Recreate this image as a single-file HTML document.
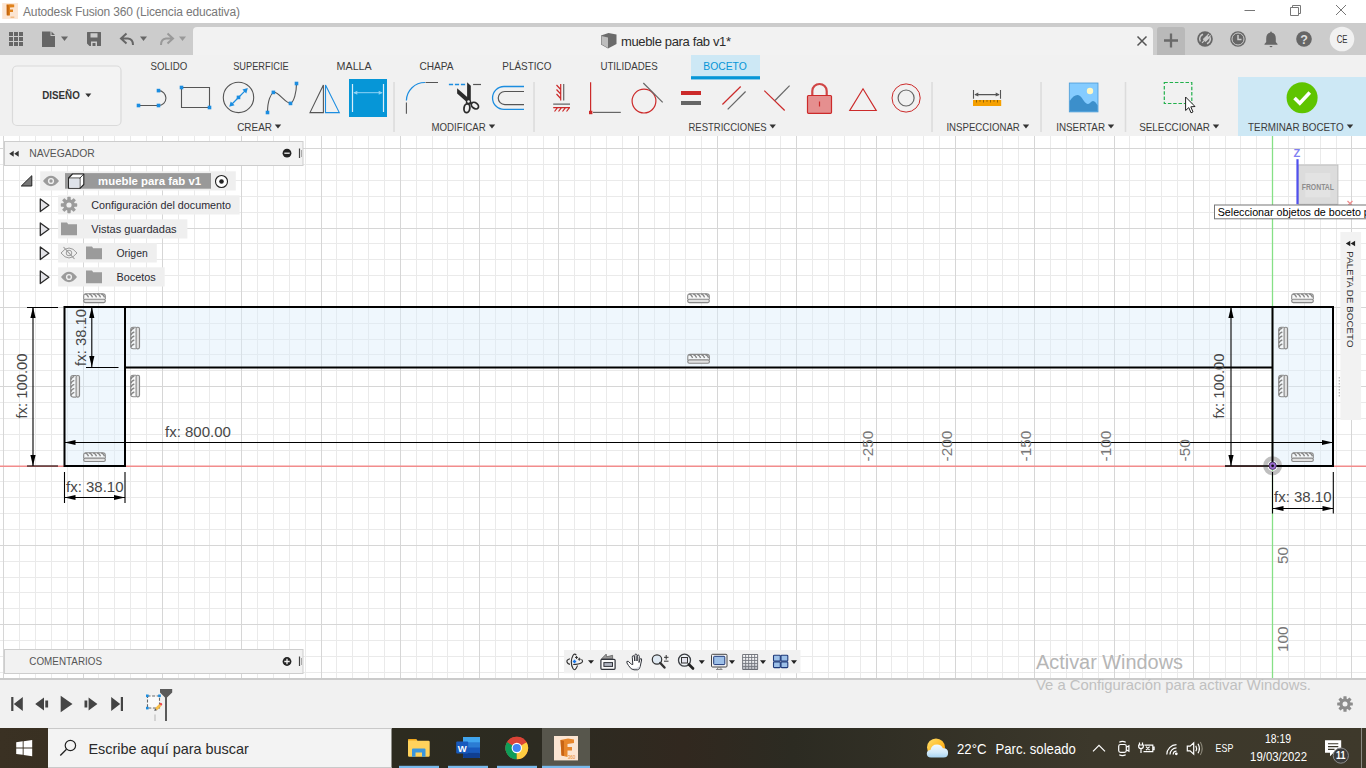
<!DOCTYPE html>
<html lang="es">
<head>
<meta charset="utf-8">
<title>Autodesk Fusion 360 (Licencia educativa)</title>
<style>
*{box-sizing:border-box;margin:0;padding:0}
html,body{width:1366px;height:768px;overflow:hidden;background:#fff}
body{position:relative;font-family:"Liberation Sans",sans-serif;font-size:11px;color:#333}
.abs{position:absolute}
.t{position:absolute;white-space:nowrap;line-height:1}
#titlebar{position:absolute;left:0;top:0;width:1366px;height:23px;background:#fff}
#qat{position:absolute;left:0;top:23px;width:1366px;height:32px;background:#cccccc}
#doctab{position:absolute;left:193px;top:27px;width:960px;height:28px;background:#f2f2f2;border-radius:4px 4px 0 0}
#plusbtn{position:absolute;left:1157px;top:27px;width:28px;height:28px;background:#b9b9b9;border-radius:3px 3px 0 0}
#toolbar{position:absolute;left:0;top:55px;width:1366px;height:81px;background:#f1f1f1}
#timeline{position:absolute;left:0;top:678px;width:1366px;height:50px;background:#f1f1f1;border-top:2px solid #cbcbcb}
#taskbar{position:absolute;left:0;top:728px;width:1366px;height:40px;background:#25231b}
.tab{position:absolute;top:60px;font-size:11.2px;color:#3c3c3c;white-space:nowrap;line-height:12px}
.grp{position:absolute;top:121px;font-size:11px;color:#3c3c3c;white-space:nowrap;line-height:12px}
.grp i{display:inline-block;width:0;height:0;border-left:3.5px solid transparent;border-right:3.5px solid transparent;border-top:4.5px solid #333;margin-left:3px;vertical-align:2px}
.sep{position:absolute;top:82px;width:2px;height:50px;background:#dcdcdc}
.row{position:absolute;height:22px;background:#efefef}
.row .t{top:5px;font-size:11px;color:#222}
</style>
</head>
<body>
<div id="titlebar">
<svg class="abs" style="left:2px;top:3px" width="16" height="16" viewBox="0 0 16 16"><rect x="0.200" y="0.100" width="15.800" height="15.800" fill="#fce5d2"/><path d="M4.700 1.600L9 1.200L12.200 1.600V4.300L8 4.600V6.500H11V9H8V12.600L4.800 12.200Z" fill="#e0821c"/><path d="M4.700 1.600L6.600 2.200V12.400L4.800 12.200Z" fill="#c4650e"/><path d="M8.500 14.200h3.800" stroke="#f0b070" stroke-width="1.200"/></svg>
<span class="t" style="left:23px;top:6px;font-size:12px;color:#787878;letter-spacing:-0.15px">Autodesk Fusion 360 (Licencia educativa)</span>
<svg class="abs" style="left:1230px;top:0" width="136" height="23" viewBox="1230 0 136 23" fill="none" stroke="#777" stroke-width="1"><path d="M1244.500 10.500H1255"/><path d="M1290.500 7.500H1298.500V15.500H1290.500ZM1292.500 7.500V5.500H1300.500V13.500H1298.500"/><path d="M1336 5L1346 15M1346 5L1336 15"/></svg>
</div>
<div id="qat">
<svg class="abs" style="left:0;top:0" width="200" height="31" viewBox="0 23 200 31">
<g fill="#666"><path d="M9 32h4v4h-4zM14 32h4v4h-4zM19 32h4v4h-4zM9 37h4v4h-4zM14 37h4v4h-4zM19 37h4v4h-4zM9 42h4v4h-4zM14 42h4v4h-4zM19 42h4v4h-4z"/>
<path d="M42 31.500h8.500v4.500h4.500v11h-13zM51.500 31.500l3.500 3.500h-3.500z"/>
<path d="M61 36.500h7l-3.500 4.500z"/>
<path d="M87 32.500q0-.5.5-.5h13q.5 0 .5.500v13q0 .5-.5.500h-11l-2.500-2.500zM90.500 33.200v4.300h7v-4.300zM91 46v-4.500h6v4.500h-1.500v-3h-3v3z" fill-rule="evenodd"/>
<path d="M140 36.500h7l-3.500 4.500z"/></g>
<path d="M126.500 33.500L121 38.500L126.500 43.500M121.500 38.500H128Q133 39 133 45" fill="none" stroke="#666" stroke-width="2"/>
<path d="M167.500 33.500L173 38.500L167.500 43.500M172.500 38.500H166Q161 39 161 45" fill="none" stroke="#999" stroke-width="2"/>
<path d="M179 36.500h7l-3.500 4.500z" fill="#999"/>
</svg>
</div>
<div id="doctab"></div>
<svg class="abs" style="left:600px;top:32px" width="18" height="18" viewBox="0 0 18 18"><path d="M1 3.500L8.500 1L16.500 2.500V12L8 16.500L1 12.500Z" fill="#6b6b6b"/><path d="M1.500 4L8 5.500V16L1.500 12.300Z" fill="#bdbdbd"/></svg>
<span class="t" style="left:621px;top:35px;font-size:13px;color:#2c2c2c;letter-spacing:-0.35px">mueble para fab v1*</span>
<svg class="abs" style="left:1136px;top:35px" width="12" height="12" viewBox="0 0 12 12"><path d="M1.500 1.500L10.500 10.500M10.500 1.500L1.500 10.500" stroke="#555" stroke-width="1.5"/></svg>
<div id="plusbtn"><svg width="28" height="27" viewBox="0 0 28 27"><path d="M14 6.500V20.500M7 13.500H21" stroke="#6a6a6a" stroke-width="2.300"/></svg></div>
<svg class="abs" style="left:1190px;top:23px" width="176" height="31" viewBox="1190 23 176 31">
<!-- extensions -->
<circle cx="1205" cy="39" r="7.800" fill="#666"/><path d="M1200.300 41.500A5.200 5.200 0 0 1 1203 34.200M1209.700 36.500A5.200 5.200 0 0 1 1207 43.800" stroke="#ccc" stroke-width="1.500" fill="none"/><path d="M1203.600 39.200l3.200-3.200l2 2l-3.200 3.200zM1207.200 35.600l1.800-1.800M1208.800 37.200l1.800-1.800M1204.200 40.600l-2.200 2.200" stroke="#ccc" stroke-width="1.200" fill="#ccc"/>
<!-- clock -->
<circle cx="1238" cy="39" r="7.800" fill="#666"/><circle cx="1238" cy="39" r="6" fill="none" stroke="#ccc" stroke-width="1"/><path d="M1238 35v4.500h3.500" stroke="#ccc" stroke-width="1.500" fill="none"/>
<!-- bell -->
<path d="M1271 31.500q.8 0 .8 1q4 1 4 6v3.500l1.700 2v.8h-13v-.8l1.700-2v-3.500q0-5 4-6q0-1 .8-1zM1269.500 46h3q-.3 1.300-1.500 1.300t-1.500-1.300z" fill="#666"/>
<!-- help -->
<circle cx="1304" cy="39" r="7.800" fill="#666"/><text x="1304" y="43.500" font-size="12.500" font-weight="bold" font-family="Liberation Sans, sans-serif" fill="#ddd" text-anchor="middle">?</text>
<!-- user -->
<circle cx="1342" cy="39" r="12.300" fill="#f1f1f1"/><text x="1336.700" y="42.600" font-size="10" font-family="Liberation Sans, sans-serif" fill="#333" textLength="10.800" lengthAdjust="spacingAndGlyphs">CE</text>
</svg>
<div id="toolbar"></div>
<svg class="abs" style="left:0;top:54px" width="1366" height="82" viewBox="0 54 1366 82" font-family="Liberation Sans, sans-serif">
<defs><path id="dd" d="M0 0h6.400l-3.200 4z" fill="#333"/><rect id="bs" x="-1.800" y="-1.800" width="3.600" height="3.600" fill="#1b8de0"/></defs>
<!-- highlighted backgrounds -->
<rect x="691" y="55" width="69" height="24.500" fill="#cde8f5"/><rect x="691" y="76.200" width="69" height="3.200" fill="#0696d7"/>
<rect x="1238" y="77" width="128" height="59" fill="#cde8f5"/>
<rect x="349" y="79" width="38" height="38" fill="#0696d7"/>
<!-- workspace button -->
<rect x="12.500" y="66" width="108.500" height="59.500" rx="4.500" fill="#f3f3f3" stroke="#dadada" stroke-width="1.200"/>
<text x="42.300" y="98.800" font-size="11.200" font-weight="bold" fill="#333" textLength="37.500" lengthAdjust="spacingAndGlyphs">DISEÑO</text>
<path d="M85.300 93.500h6l-3 3.800z" fill="#333"/>
<!-- tabs -->
<g font-size="11.200" fill="#3c3c3c">
<text x="150.600" y="69.900" textLength="36.600" lengthAdjust="spacingAndGlyphs">SOLIDO</text>
<text x="233.200" y="69.900" textLength="55.500" lengthAdjust="spacingAndGlyphs">SUPERFICIE</text>
<text x="336.600" y="69.900" textLength="35.100" lengthAdjust="spacingAndGlyphs">MALLA</text>
<text x="419.500" y="69.900" textLength="34.100" lengthAdjust="spacingAndGlyphs">CHAPA</text>
<text x="502.300" y="69.900" textLength="49.100" lengthAdjust="spacingAndGlyphs">PLÁSTICO</text>
<text x="600.400" y="69.900" textLength="57.300" lengthAdjust="spacingAndGlyphs">UTILIDADES</text>
<text x="703.300" y="69.900" textLength="43.500" lengthAdjust="spacingAndGlyphs" fill="#0696d7">BOCETO</text>
</g>
<!-- group labels -->
<g font-size="10.600" fill="#3c3c3c">
<text x="237.200" y="130.700" textLength="34.800" lengthAdjust="spacingAndGlyphs">CREAR</text><use href="#dd" x="274.800" y="124.500"/>
<text x="431.500" y="130.700" textLength="54.300" lengthAdjust="spacingAndGlyphs">MODIFICAR</text><use href="#dd" x="488.800" y="124.500"/>
<text x="688.500" y="130.700" textLength="78.200" lengthAdjust="spacingAndGlyphs">RESTRICCIONES</text><use href="#dd" x="769.500" y="124.500"/>
<text x="946.400" y="130.700" textLength="73.400" lengthAdjust="spacingAndGlyphs">INSPECCIONAR</text><use href="#dd" x="1022.800" y="124.500"/>
<text x="1056.200" y="130.700" textLength="48.800" lengthAdjust="spacingAndGlyphs">INSERTAR</text><use href="#dd" x="1107.800" y="124.500"/>
<text x="1139.200" y="130.700" textLength="70.800" lengthAdjust="spacingAndGlyphs">SELECCIONAR</text><use href="#dd" x="1212.800" y="124.500"/>
<text x="1248.100" y="130.700" textLength="95.500" lengthAdjust="spacingAndGlyphs">TERMINAR BOCETO</text><use href="#dd" x="1346.800" y="124.500"/>
</g>
<!-- separators -->
<g stroke="#dcdcdc" stroke-width="1.600"><path d="M394 82V132M534 82V132M932 82V132M1041 82V132M1125.500 82V132"/></g>
<!-- CREAR icons -->
<g fill="none" stroke="#555" stroke-width="1.100">
<path d="M138.500 105.500H158.500M158.500 90.600A7.450 7.450 0 0 1 158.500 105.500"/>
<path d="M181.500 87.500H209.500V107.500H181.500Z"/>
<circle cx="238.500" cy="97.400" r="15.200"/>
<path d="M267.500 112.500C267.500 100 271 94 273.400 92.400C278 91 285 103 290.500 103.400C294 102 296.500 92 296.500 83.500"/>
<path d="M310 112.600H323.400V85Z"/>
</g>
<use href="#bs" x="138.500" y="105.500"/><use href="#bs" x="158.500" y="105.500"/><use href="#bs" x="158.500" y="90.600"/>
<use href="#bs" x="181.500" y="87.500"/><use href="#bs" x="209.500" y="107.500"/>
<use href="#bs" x="238.500" y="97.400"/>
<path d="M231.500 104.500L245.500 90.400" stroke="#1b8de0" stroke-width="1.300"/><path d="M247.800 88L246.300 93.400L242.400 89.500ZM229.200 106.800L230.700 101.400L234.600 105.300Z" fill="#1b8de0"/>
<use href="#bs" x="267.500" y="112.500"/><use href="#bs" x="273.400" y="92.400"/><use href="#bs" x="290.500" y="103.400"/><use href="#bs" x="296.500" y="83.500"/>
<path d="M325.500 85V112.600H339.300Z" fill="none" stroke="#1b8de0" stroke-width="1.100"/>
<!-- dimension (active) -->
<path d="M352.500 84V112M383.500 84V112" stroke="#d9eefa" stroke-width="1.200"/><path d="M354 92.700H382" stroke="#8fd3f5" stroke-width="1"/><path d="M353.300 92.700l4-2v4zM382.700 92.700l-4-2v4z" fill="#8fd3f5"/>
<!-- MODIFICAR icons -->
<path d="M406.400 100.600A18.500 18.500 0 0 1 425 82.500" fill="none" stroke="#1b8de0" stroke-width="1.200"/><path d="M425.500 82.500H438M406.400 102.500V113.800" stroke="#555" stroke-width="1.100" fill="none"/>
<path d="M448.900 84.500H466" stroke="#1b8de0" stroke-width="1.300" stroke-dasharray="4.200 1.800"/><path d="M473.100 84.500H481" stroke="#555" stroke-width="1.200"/>
<g fill="#2b2b2b"><path d="M467.100 82.200L470.800 85.800V102.500L467.100 100Z"/><path d="M457.100 88.200V93.600L467 102.300L469.500 99Z"/></g>
<path d="M466 99.500L471 100.500L471.800 104L468.500 105L465.800 103Z" fill="#2b2b2b"/><circle cx="468.500" cy="101.500" r="1.250" fill="#f1f1f1"/>
<g fill="none" stroke="#2b2b2b" stroke-width="1.800"><ellipse cx="466.900" cy="108.300" rx="2.900" ry="4.400" transform="rotate(8 466.900 108.300)"/><ellipse cx="474.900" cy="105.600" rx="4" ry="2.800" transform="rotate(38 474.900 105.600)"/></g>
<path d="M524 86.500H504A11.450 11.450 0 0 0 504 109.400H524" fill="none" stroke="#1b8de0" stroke-width="1.300"/><path d="M524 91.500H504.800A6.550 6.550 0 0 0 504.800 104.600H524" fill="none" stroke="#555" stroke-width="1.200"/>
<!-- RESTRICCIONES icons -->
<g stroke="#cc2a2a" stroke-width="1.200" fill="none">
<path d="M560.700 84V100.600M560.700 89.500L556.500 85M560.700 94L556.500 89.500M560.700 98.500L556.500 94"/>
<path d="M553.200 107.600H570M557.500 107.600L554.500 111.500M561.500 107.600L558.500 111.500M565.500 107.600L562.500 111.500M569.500 107.600L566.500 111.500"/>
<path d="M590.600 82.200V111"/>
<circle cx="644" cy="101.100" r="11.900"/>
<path d="M722.400 104.500L740.700 86.500"/>
<path d="M764.300 90.600L784.700 110.500"/>
<path d="M849.800 110.500H876.200L863 88.800Z"/>
<circle cx="906.100" cy="98" r="14.100" stroke-width="1"/>
</g>
<g stroke="#666" stroke-width="1.200" fill="none">
<path d="M563.700 84V100.600M553.200 104.100H570"/>
<path d="M593 112.400H620.800"/>
<path d="M643.300 83L662.700 102.400"/>
<path d="M727.700 109.400L745.600 91.500"/>
<path d="M789.600 85.600L775 100.500"/>
<circle cx="906.100" cy="98" r="8"/>
</g>
<rect x="589" y="110.800" width="3.400" height="3.400" fill="#cc2a2a"/>
<rect x="681" y="91" width="20" height="4" fill="#cc2a2a"/><rect x="681" y="101" width="20" height="4" fill="#666"/>
<path d="M812.300 95.500V91A7.200 7 0 0 1 826.700 91V95.500" fill="none" stroke="#d04545" stroke-width="2.200"/>
<rect x="807.500" y="95.500" width="24" height="17.800" rx="1" fill="#e58f8f" stroke="#cc2a2a" stroke-width="1.200"/><path d="M819.500 101.500V106.500" stroke="#cc2a2a" stroke-width="1.200"/>
<!-- INSPECCIONAR -->
<rect x="973" y="100" width="28.200" height="6" fill="#f5a000"/><path d="M976.500 100v2.500M980 100v1.800M983.500 100v2.500M987 100v1.800M990.500 100v2.500M994 100v1.800M997.500 100v2.500" stroke="#8a5a00" stroke-width=".9"/>
<path d="M973.500 90V98.700M1000.500 90V98.700M975 94.600H999" stroke="#555" stroke-width="1.100" fill="none"/><path d="M974.300 94.600l4-2v4zM999.700 94.600l-4-2v4z" fill="#555"/>
<!-- INSERTAR -->
<rect x="1069.300" y="83" width="28.700" height="28.900" fill="#85ccff" stroke="#4a9ad4" stroke-width=".8"/>
<path d="M1069.700 101C1073 96 1077 93.500 1080 96C1083 98.500 1085 104 1088 104C1090 104 1091 101 1093 101C1095 101 1096.500 103.500 1097.600 105.500V111.500H1069.700Z" fill="#3c8fcb"/><circle cx="1090" cy="91" r="3.200" fill="#fff8c4"/>
<!-- SELECCIONAR -->
<rect x="1164.300" y="82.500" width="27.500" height="21" fill="none" stroke="#21b04b" stroke-width="1.200" stroke-dasharray="3.500 1.800"/>
<path d="M1185.600 97V110.500L1188.800 107.600L1191 112.800L1193 111.900L1190.800 106.800L1195 106.500Z" fill="#fff" stroke="#222" stroke-width="1"/>
<!-- TERMINAR -->
<circle cx="1302.100" cy="97.800" r="15.500" fill="#5fc400"/><path d="M1294.500 98L1299.800 103.200L1309.800 92.600" fill="none" stroke="#fff" stroke-width="3.600"/>
</svg>
<svg class="abs" style="left:0;top:136px" width="1366" height="542" viewBox="0 136 1366 542" font-family="Liberation Sans, sans-serif">
<defs>
<g id="hg"><path d="M-10.800 1.200V-1.800Q-10.800 -4.300 -8.300 -4.300H8.300Q10.800 -4.300 10.800 -1.800V1.200" fill="#f6f6f6" fill-opacity=".7" stroke="#8a8a8a" stroke-width="1.100"/><rect x="-10.800" y="1.100" width="21.600" height="3.400" rx="1.500" fill="#e2e2e2" stroke="#888" stroke-width="1.150"/><path d="M-9.300 -3.900q2.300 .2 3.300 3.200M-5.300 -3.900q2.300 .2 3.300 3.200M-1.300 -3.900q2.300 .2 3.300 3.200M2.700 -3.900q2.300 .2 3.300 3.200M6.700 -3.900q2.300 .2 3.300 3.200" stroke="#858585" stroke-width="1.350" fill="none"/></g>
<g id="vg"><use href="#hg" transform="rotate(-90)"/></g>
<path id="ar" d="M0 0L-2.600 11H2.600Z" fill="#000"/>
</defs>
<path d="M19.5 136V678M35.5 136V678M51.5 136V678M67.5 136V678M98.5 136V678M114.5 136V678M130.5 136V678M146.5 136V678M178.5 136V678M194.5 136V678M209.5 136V678M225.5 136V678M257.5 136V678M273.5 136V678M289.5 136V678M305.5 136V678M336.5 136V678M352.5 136V678M368.5 136V678M384.5 136V678M416.5 136V678M432.5 136V678M447.5 136V678M463.5 136V678M495.5 136V678M511.5 136V678M527.5 136V678M543.5 136V678M574.5 136V678M590.5 136V678M606.5 136V678M622.5 136V678M654.5 136V678M669.5 136V678M685.5 136V678M701.5 136V678M733.5 136V678M749.5 136V678M765.5 136V678M780.5 136V678M812.5 136V678M828.5 136V678M844.5 136V678M860.5 136V678M891.5 136V678M907.5 136V678M923.5 136V678M939.5 136V678M971.5 136V678M987.5 136V678M1002.5 136V678M1018.5 136V678M1050.5 136V678M1066.5 136V678M1082.5 136V678M1098.5 136V678M1129.5 136V678M1145.5 136V678M1161.5 136V678M1177.5 136V678M1209.5 136V678M1225.5 136V678M1240.5 136V678M1256.5 136V678M1288.5 136V678M1304.5 136V678M1320.5 136V678M1336.5 136V678M0 164.5H1366M0 180.5H1366M0 196.5H1366M0 212.5H1366M0 243.5H1366M0 259.5H1366M0 275.5H1366M0 291.5H1366M0 323.5H1366M0 339.5H1366M0 354.5H1366M0 370.5H1366M0 402.5H1366M0 418.5H1366M0 434.5H1366M0 450.5H1366M0 481.5H1366M0 497.5H1366M0 513.5H1366M0 529.5H1366M0 561.5H1366M0 577.5H1366M0 592.5H1366M0 608.5H1366M0 640.5H1366M0 656.5H1366M0 672.5H1366" stroke="#eaeaea" stroke-width="1" fill="none"/>
<path d="M3.5 136V678M83.5 136V678M162.5 136V678M241.5 136V678M321.5 136V678M400.5 136V678M479.5 136V678M558.5 136V678M638.5 136V678M717.5 136V678M796.5 136V678M876.5 136V678M955.5 136V678M1034.5 136V678M1114.5 136V678M1193.5 136V678M1272.5 136V678M1351.5 136V678M0 148.5H1366M0 228.5H1366M0 307.5H1366M0 386.5H1366M0 466.5H1366M0 545.5H1366M0 624.5H1366" stroke="#d6d6d6" stroke-width="1" fill="none"/>
<!-- axes -->
<path d="M0 466.300H1366" stroke="#f28c8c" stroke-width="1.500"/>
<path d="M1272.5 136V678" stroke="#86e086" stroke-width="1.3"/>
<!-- profile fill -->
<path d="M64.5 307H1333V466H1272.5V367H125V466H64.5Z" fill="#dcedfa" fill-opacity="0.45"/>
<!-- origin halo -->
<circle cx="1272.600" cy="465.800" r="7.300" fill="none" stroke="#bcbcbc" stroke-opacity=".95" stroke-width="4.400"/>
<!-- sketch lines -->
<g stroke="#000" stroke-width="2" fill="none" stroke-linecap="square">
<path d="M64.5 307H1333V466H1272.5V307M1272.5 367.400H125M125 307V466H64.5V307"/>
</g>
<path d="M1225 466H1272" stroke="#000" stroke-width="1.6"/>
<!-- constraint glyphs -->
<use href="#hg" x="94.5" y="298.100"/><use href="#hg" x="698.5" y="298.100"/><use href="#hg" x="1302.5" y="298.100"/>
<use href="#hg" x="698.600" y="358.700"/><use href="#hg" x="94.5" y="457"/><use href="#hg" x="1302.5" y="457"/>
<use href="#vg" x="135" y="338"/><use href="#vg" x="135" y="386"/><use href="#vg" x="75" y="386.300"/>
<use href="#vg" x="1283" y="338"/><use href="#vg" x="1283" y="386"/>
<!-- dimensions -->
<g stroke="#000" stroke-width="1.1" fill="none">
<path d="M27 307.5H58M27 466H58M33 307V466"/>
<path d="M91.800 307V367M86 367.500H118.500"/>
<path d="M64 442.5H1333"/>
<path d="M64.500 472V503M125 472V503M64 497.5H125"/>
<path d="M1231 307V466"/>
<path d="M1272.500 472V513.500M1333.300 472V513.500M1272 508.500H1333"/>
</g>
<use href="#ar" x="33" y="307"/><use href="#ar" transform="translate(33 466) rotate(180)"/>
<use href="#ar" x="91.800" y="307"/><use href="#ar" transform="translate(91.800 367) rotate(180)"/>
<use href="#ar" transform="translate(64.5 442.5) rotate(-90)"/><use href="#ar" transform="translate(1333 442.5) rotate(90)"/>
<use href="#ar" transform="translate(64.5 497.5) rotate(-90)"/><use href="#ar" transform="translate(125 497.500) rotate(90)"/>
<use href="#ar" x="1231" y="307"/><use href="#ar" transform="translate(1231 466) rotate(180)"/>
<use href="#ar" transform="translate(1272.5 508.500) rotate(-90)"/><use href="#ar" transform="translate(1333.500 508.500) rotate(90)"/>
<g font-size="15" fill="#474747">
<text x="165" y="437">fx: 800.00</text>
<text x="66" y="492">fx: 38.10</text>
<text x="1274" y="502">fx: 38.10</text>
<text transform="translate(27 418.600) rotate(-90)" textLength="65.200" lengthAdjust="spacingAndGlyphs">fx: 100.00</text>
<text transform="translate(85.500 365.900) rotate(-90)" textLength="57" lengthAdjust="spacingAndGlyphs">fx: 38.10</text>
<text transform="translate(1224.300 418.600) rotate(-90)" textLength="65.200" lengthAdjust="spacingAndGlyphs">fx: 100.00</text>
</g>
<g font-size="15.300" fill="#777">
<text transform="translate(872.800 461.400) rotate(-90)">-250</text>
<text transform="translate(952.100 461.400) rotate(-90)">-200</text>
<text transform="translate(1031.400 461.400) rotate(-90)">-150</text>
<text transform="translate(1110.700 461.400) rotate(-90)">-100</text>
<text transform="translate(1190 461.400) rotate(-90)">-50</text>
<text transform="translate(1288.300 564) rotate(-90)">50</text>
<text transform="translate(1288.300 652) rotate(-90)">100</text>
</g>
<!-- origin -->
<circle cx="1272.600" cy="465.800" r="3.700" fill="#9a6cd2" stroke="#3b2c4e" stroke-width=".8"/>
<circle cx="1272.600" cy="465.800" r="1.400" fill="#0a0a0a"/>
<!-- ===== overlays inside canvas svg ===== -->
<defs>
<path id="exp" d="M0 0L8.600 6.300L0 12.600Z" fill="#e4e4e8" stroke="#2a2a2a" stroke-width="1.300" stroke-linejoin="round"/>
<path id="fold" d="M0 0H6L7.200 1.700H16V12.600H0Z" fill="#9b9b9b"/>
<g id="eye"><path d="M-8 0Q-4 -5.200 0 -5.200Q4 -5.200 8 0Q4 5.200 0 5.200Q-4 5.200 -8 0Z" fill="#9b9b9b"/><circle r="3.100" fill="#efefef"/><circle r="1.700" fill="#9b9b9b"/></g>
<path id="dda" d="M0 0h6l-3 3.600z" fill="#222"/>
</defs>
<!-- browser header -->
<rect x="4.500" y="141.500" width="298.500" height="24" fill="#f2f2f2" stroke="#cdcdcd" stroke-width="1"/>
<path d="M9.200 153.800l4.500-3v6zM14.200 153.800l4.500-3v6z" fill="#333"/>
<text x="29.300" y="156.700" font-size="10.600" fill="#555" textLength="65.500" lengthAdjust="spacingAndGlyphs">NAVEGADOR</text>
<circle cx="287" cy="153.200" r="4.400" fill="#222"/><path d="M284.300 153.200h5.400" stroke="#f2f2f2" stroke-width="1.300"/>
<path d="M299.500 148.500V158" stroke="#444" stroke-width="1.200"/><path d="M301.500 150V157" stroke="#aaa" stroke-width="1"/>
<!-- tree rows -->
<rect x="40.200" y="171.300" width="195.600" height="19.200" fill="#efefef"/>
<rect x="58.100" y="195.300" width="181.500" height="19.200" fill="#efefef"/>
<rect x="58.100" y="219.300" width="129.300" height="19.200" fill="#efefef"/>
<rect x="58.100" y="243.300" width="98.700" height="19.200" fill="#efefef"/>
<rect x="58.100" y="267.300" width="106.600" height="19.200" fill="#efefef"/>
<path d="M21.300 186H31.800V175.700Z" fill="#777" stroke="#222" stroke-width="1" stroke-linejoin="round"/>
<use href="#eye" x="51" y="181"/>
<rect x="65" y="173.100" width="146" height="15.600" fill="#999"/>
<path d="M68.600 178L72.500 174H83.800V184.500L80 188.300H68.600Z" fill="#fff" stroke="#222" stroke-width="1.100" stroke-linejoin="round"/><path d="M68.600 178H80V188.300M80 178L83.800 174" fill="none" stroke="#222" stroke-width=".9"/><rect x="69.400" y="178.800" width="10" height="8.800" fill="#dfe3ea"/>
<text x="98.100" y="184.900" font-size="11" font-weight="bold" fill="#fff" textLength="103" lengthAdjust="spacingAndGlyphs">mueble para fab v1</text>
<circle cx="221.500" cy="181.500" r="6" fill="#fff" stroke="#222" stroke-width="1.100"/><circle cx="221.500" cy="181.500" r="2.300" fill="#222"/>
<use href="#exp" x="40.300" y="198.900"/><use href="#exp" x="40.300" y="222.900"/><use href="#exp" x="40.300" y="246.900"/><use href="#exp" x="40.300" y="270.900"/>
<!-- gear -->
<g transform="translate(69 205)" fill="#9b9b9b"><circle r="5.800"/><g><rect x="-1.700" y="-8.200" width="3.400" height="16.400" rx=".6"/><rect x="-1.700" y="-8.200" width="3.400" height="16.400" rx=".6" transform="rotate(45)"/><rect x="-1.700" y="-8.200" width="3.400" height="16.400" rx=".6" transform="rotate(90)"/><rect x="-1.700" y="-8.200" width="3.400" height="16.400" rx=".6" transform="rotate(135)"/></g><circle r="2.600" fill="#efefef"/></g>
<use href="#fold" x="61" y="222.600"/><use href="#fold" x="86" y="246.600"/><use href="#fold" x="86" y="270.600"/>
<g transform="translate(69 253)"><path d="M-8 0Q-4 -5 0 -5Q4 -5 8 0Q4 5 0 5Q-4 5 -8 0Z" fill="none" stroke="#9b9b9b" stroke-width="1"/><circle r="2.800" fill="none" stroke="#9b9b9b" stroke-width="1"/><path d="M-5.500 -6L5.500 6" stroke="#9b9b9b" stroke-width="1.100"/></g>
<use href="#eye" x="69" y="277"/>
<g font-size="10.600" fill="#2b2b33">
<text x="91.300" y="208.900" textLength="139.700" lengthAdjust="spacingAndGlyphs">Configuración del documento</text>
<text x="91.300" y="232.800" textLength="85.300" lengthAdjust="spacingAndGlyphs">Vistas guardadas</text>
<text x="116.500" y="256.800" textLength="31.200" lengthAdjust="spacingAndGlyphs">Origen</text>
<text x="116.500" y="280.700" textLength="39.300" lengthAdjust="spacingAndGlyphs">Bocetos</text>
</g>
<!-- view cube -->
<text x="1293.600" y="156.700" font-size="10.500" fill="#7f7ff2" font-weight="bold" textLength="6.800" lengthAdjust="spacingAndGlyphs">Z</text>
<rect x="1298.300" y="165" width="39.600" height="39.300" fill="#dcdcdc" stroke="#bdbdbd" stroke-width="1"/>
<rect x="1305.200" y="172.900" width="25" height="24.400" fill="#e3e3e3"/>
<path d="M1297.500 159.200V204.300" stroke="#5050ee" stroke-width="2.200"/>
<text x="1301.700" y="190" font-size="9.600" font-weight="bold" fill="#8e8e8e" textLength="32.300" lengthAdjust="spacingAndGlyphs">FRONTAL</text>
<path d="M1347.500 201L1352.500 206M1352.500 201L1347.500 206" stroke="#f08a8a" stroke-width="1.200"/>
<!-- tooltip -->
<rect x="1214.500" y="205" width="160" height="13.800" fill="#fff" stroke="#767676" stroke-width="1"/>
<text x="1217.700" y="215.500" font-size="11.800" fill="#000" textLength="152.100" lengthAdjust="spacingAndGlyphs">Seleccionar objetos de boceto p</text>
<!-- palette tab -->
<rect x="1340.400" y="232" width="20.700" height="188" fill="#f2f2f2"/>
<path d="M1345.800 243.500l4.500-2.800v5.600zM1350.600 243.500l4.500-2.800v5.600z" fill="#222"/>
<text transform="translate(1346.800 251.300) rotate(90)" font-size="9.700" fill="#333" textLength="96.200" lengthAdjust="spacing">PALETA DE BOCETO</text>
<path d="M1339.300 377V397" stroke="#b5b5b5" stroke-width="1.200" stroke-dasharray="1.500 1.500"/>
<!-- comments -->
<rect x="4.500" y="649.500" width="298.500" height="24" fill="#f2f2f2" stroke="#cdcdcd" stroke-width="1"/>
<text x="29.300" y="665.200" font-size="10.600" fill="#555" textLength="72.700" lengthAdjust="spacingAndGlyphs">COMENTARIOS</text>
<circle cx="287" cy="661.500" r="4.400" fill="#222"/><path d="M284.300 661.500h5.400M287 658.800v5.400" stroke="#f2f2f2" stroke-width="1.300"/>
<path d="M299.500 656.500V666" stroke="#444" stroke-width="1.200"/><path d="M301.500 658V665" stroke="#aaa" stroke-width="1"/>
<!-- nav bar -->
<rect x="564" y="650" width="236.500" height="23.300" fill="#f1f1f1"/>
<use href="#dda" x="588" y="660.200"/><use href="#dda" x="698.800" y="660.300"/><use href="#dda" x="729" y="660.300"/><use href="#dda" x="760" y="660.300"/><use href="#dda" x="791" y="660.300"/>
<!-- orbit -->
<g fill="none" stroke="#333" stroke-width="1.150"><path d="M576.300 655.200Q574.500 653 573 655.500Q571.300 658.500 571.300 661.800Q571.300 666 573 668.500Q574.500 671 576.200 668.300Q577.300 666.500 577.500 665.500"/><path d="M569.900 658.800Q566.300 660 567 662Q567.500 663.600 569.900 664.400M581.500 659.300Q583.600 661.300 581.500 662.800Q579 664.400 573.200 664.500"/><path d="M576.500 655.900v3M575 657.400h3M579.300 657.700v3M577.800 659.200h3" stroke-width="1"/></g><path d="M574.500 659.800v3.400M572.800 661.500h3.400" stroke="#1473e6" stroke-width="1.500"/>
<!-- look at -->
<path d="M601.500 658.800L606.200 654.100L606.600 656.800L612.600 655.300V658.800Z" fill="#999" stroke="#555" stroke-width=".7"/>
<rect x="600.900" y="659.300" width="14.200" height="10" rx="1" fill="#fafafa" stroke="#30333a" stroke-width="1.200"/><rect x="603.900" y="662.600" width="8.600" height="3.800" fill="#b2b6c2" stroke="#30333a" stroke-width="1"/>
<!-- hand -->
<path d="M630.200 663.200Q628 660.300 626.900 661.400Q626.200 662.500 628.500 665.500Q631 669.800 634 669.800H637.500Q639.800 669.300 640.200 666.500L641.600 660Q641.800 658.300 640.700 658.500Q640 658.700 639.600 660.500L639 662.500L639.300 656.500Q639.200 655 638.300 655Q637.400 655 637.200 656.500L637 661V655.500Q636.900 654 635.900 654Q634.900 654 634.800 655.500V661L634.300 656.800Q634 655.400 633.100 655.600Q632.200 655.800 632.300 657.300L632.800 664.500Q631.800 664.800 630.200 663.200Z" fill="#fff" stroke="#30333a" stroke-width="1"/><path d="M632 668.500Q634 669.300 637.500 669Q639.500 668.300 639.800 666Q637 668.500 632 668.500Z" fill="#d5d8e0"/>
<!-- zoom -->
<circle cx="657" cy="659.500" r="4.700" fill="#dfe9f2" stroke="#333" stroke-width="1.200"/><path d="M660.300 663L664.500 667.500" stroke="#333" stroke-width="2.400" stroke-linecap="round"/><path d="M664 657.300h4.500M666.200 655v4.600M664 661.200h4.500" stroke="#333" stroke-width="1"/>
<!-- zoom window -->
<circle cx="684.500" cy="660.200" r="6" fill="#eef3f6" stroke="#3c3f44" stroke-width="1.300"/><rect x="681.500" y="657.500" width="6" height="5.500" fill="#e4e4ee" stroke="#333" stroke-width="1"/><path d="M689 664.500L693 668.500" stroke="#222" stroke-width="2.600" stroke-linecap="round"/>
<!-- display -->
<rect x="711.500" y="654.300" width="15.500" height="12.700" rx="1" fill="#f4f4f4" stroke="#444" stroke-width="1"/><rect x="713.700" y="656.300" width="11.100" height="8.300" rx=".8" fill="#9dc0e8" stroke="#1f3a7a" stroke-width="1"/><path d="M716 669.500h6.500M717.500 667.500h3.500v2h-3.500z" stroke="#888" stroke-width="1" fill="#ddd"/>
<!-- grid -->
<defs><linearGradient id="gcell" x1="0" y1="0" x2="0" y2="1"><stop offset="0" stop-color="#fdfdfd"/><stop offset=".5" stop-color="#eceef0"/><stop offset="1" stop-color="#b9bcc2"/></linearGradient></defs>
<rect x="742.200" y="654" width="15.900" height="15.900" rx="1" fill="#686b72"/><rect x="743.100" y="654.900" width="14.100" height="14.100" fill="url(#gcell)"/><path d="M745.650 654.500v15M748.650 654.500v15M751.650 654.500v15M754.650 654.500v15M742.700 657.450h15M742.700 660.450h15M742.700 663.450h15M742.700 666.450h15" stroke="#74777e" stroke-width=".9"/>
<!-- viewports -->
<g fill="#9dc0e8" stroke="#1f3a7a" stroke-width="1.100"><rect x="773.500" y="655.300" width="6.800" height="5.700" rx=".8"/><rect x="781" y="655.300" width="6.800" height="5.700" rx=".8"/><rect x="773.500" y="661.900" width="6.800" height="5.700" rx=".8"/><rect x="781" y="661.900" width="6.800" height="5.700" rx=".8"/></g>
<!-- windows watermark -->
<text x="1036" y="669" font-size="19.500" fill="#b6b6b6" textLength="147" lengthAdjust="spacingAndGlyphs">Activar Windows</text>
</svg>
<div id="timeline"></div>
<svg class="abs" style="left:0;top:678px" width="1366" height="50" viewBox="0 678 1366 50" font-family="Liberation Sans, sans-serif">
<g fill="#444">
<path d="M11.200 697h2.200v14h-2.200zM22.800 697v14l-9-7z"/>
<path d="M44 697.500v13l-8.800-6.500zM45.300 700.500h2.800v7h-2.800z"/>
<path d="M60.700 695.800l11.800 8.200l-11.800 8.200z"/>
<path d="M88.600 697.500v13l8.800-6.500zM84.500 700.500h2.800v7h-2.800z"/>
<path d="M120.800 697h2.200v14h-2.200zM111.200 697v14l9-7z"/>
</g>
<!-- sketch feature -->
<rect x="147.500" y="696" width="12" height="12" fill="#fafafa" stroke="#666" stroke-width="1.100" stroke-dasharray="3 1.600"/>
<rect x="146" y="694.500" width="2.600" height="2.600" fill="#1b8de0"/><rect x="158.200" y="694.500" width="2.600" height="2.600" fill="#1b8de0"/><rect x="146" y="706.800" width="2.600" height="2.600" fill="#1b8de0"/>
<path d="M155 708.200L159.300 703.900L161.300 705.900L157 710.200Z" fill="#f7bd45"/><path d="M159.300 703.900l.9-.9q1-.4 1.600.3t.3 1.600l-.9.900z" fill="#ee4a4a"/><path d="M155 708.200l2 2l-2.700.7z" fill="#555"/>
<path d="M155 714.400V721" stroke="#c8c8c8" stroke-width="1.500"/>
<path d="M160 689H172.200V692.600L167 697.600V721H165V697.600L160 692.600Z" fill="#5a5a5a"/>
<!-- gear -->
<g transform="translate(1345 704)" fill="#8c8c8c"><circle r="5.600"/><rect x="-1.600" y="-7.800" width="3.200" height="15.600" rx=".5"/><rect x="-1.600" y="-7.800" width="3.200" height="15.600" rx=".5" transform="rotate(45)"/><rect x="-1.600" y="-7.800" width="3.200" height="15.600" rx=".5" transform="rotate(90)"/><rect x="-1.600" y="-7.800" width="3.200" height="15.600" rx=".5" transform="rotate(135)"/><circle r="2.500" fill="#f1f1f1"/></g>
<text x="1036" y="690" font-size="14.500" fill="#c0c0c0" textLength="275" lengthAdjust="spacingAndGlyphs">Ve a Configuración para activar Windows.</text>
</svg>
<div id="taskbar"></div>
<svg class="abs" style="left:0;top:728px" width="1366" height="40" viewBox="0 728 1366 40" font-family="Liberation Sans, sans-serif">
<defs><linearGradient id="tbg" x1="0" x2="1366" y1="0" y2="0" gradientUnits="userSpaceOnUse"><stop offset="0" stop-color="#3a3123"/><stop offset=".035" stop-color="#393022"/><stop offset=".29" stop-color="#2d2b20"/><stop offset=".4" stop-color="#2c2b21"/><stop offset=".5" stop-color="#31281f"/><stop offset=".58" stop-color="#2c2b22"/><stop offset=".8" stop-color="#3c382b"/><stop offset="1" stop-color="#3e392b"/></linearGradient><linearGradient id="sun" x1="0" y1="0" x2="1" y2="1"><stop offset="0" stop-color="#ffe070"/><stop offset=".5" stop-color="#ffc030"/><stop offset="1" stop-color="#ff9500"/></linearGradient><linearGradient id="cld" x1="0" y1="0" x2="0" y2="1"><stop offset="0" stop-color="#f2f9fe"/><stop offset=".6" stop-color="#d2eafa"/><stop offset="1" stop-color="#a8d4f2"/></linearGradient></defs>
<rect x="0" y="728" width="1366" height="40" fill="url(#tbg)"/>
<!-- start -->
<path d="M16.200 742.200l6.500-.9v6.300h-6.500zM23.600 741.200l8.600-1.300v7.700h-8.600zM16.200 748.500h6.500v6.300l-6.500-.9zM23.600 748.500h8.600v7.800l-8.600-1.300z" fill="#fff"/>
<!-- search -->
<rect x="48" y="728" width="343.500" height="40" fill="#f3f3f3"/><path d="M48 728.500H391.500M48 767.500H391.500" stroke="#c9c9c9" stroke-width="1"/>
<circle cx="70.400" cy="745.500" r="5.200" fill="none" stroke="#222" stroke-width="1.200"/><path d="M66.500 749.300L60.300 755.500" stroke="#222" stroke-width="1.300"/>
<text x="88.400" y="754" font-size="15" fill="#2a2a2a" textLength="160.500" lengthAdjust="spacingAndGlyphs">Escribe aquí para buscar</text>
<!-- app icons -->
<rect x="542" y="728" width="48" height="40" fill="#57564c"/>
<g fill="#78b9ec"><rect x="399" y="765.800" width="40" height="2.200"/><rect x="448" y="765.800" width="40" height="2.200"/><rect x="497" y="765.800" width="40" height="2.200"/><rect x="542" y="765.800" width="48" height="2.200"/></g>
<!-- explorer -->
<path d="M408 740.500q0-1.500 1.500-1.500h6.500l1.500 1.800h11q1.200 0 1.200 1.200v13.500q0 1.200-1.200 1.200h-19.300q-1.200 0-1.200-1.200z" fill="#ffd25c"/><path d="M408 739.800q0-.8 1-.8h7l1 1.500h-9z" fill="#f0a71c"/>
<path d="M412 749.500q0-1 1-1h11.500q1 0 1 1v7.200h-3.500v-4.200h-6.500v4.200h-3.500z" fill="#3a96dd"/>
<!-- word -->
<rect x="463" y="737" width="17" height="21" rx="1" fill="#2b7cd3"/><rect x="463" y="737" width="17" height="5.300" fill="#41a5ee"/><rect x="463" y="747.500" width="17" height="5.300" fill="#185abd"/><rect x="463" y="752.700" width="17" height="5.300" rx="1" fill="#103f91"/>
<rect x="456.200" y="741.500" width="12" height="12" rx="1" fill="#185abd"/><text x="462.200" y="751.500" font-size="9.500" font-weight="bold" fill="#fff" text-anchor="middle">W</text>
<!-- chrome -->
<circle cx="516.800" cy="748" r="11.300" fill="#db4437"/><path d="M516.800 748L507 753.650A11.300 11.300 0 0 1 507 742.350Z" fill="#db4437"/><path d="M516.800 748L507.010 742.350A11.300 11.300 0 0 0 516.800 759.300Z" fill="#0f9d58"/><path d="M516.800 748L516.800 759.300A11.300 11.300 0 0 0 526.590 742.350Z" fill="#ffcd40"/><path d="M507.010 742.350A11.300 11.300 0 0 1 526.590 742.350L516.800 742.900Z" fill="#db4437"/>
<path d="M516.800 748l-9.790-5.650a11.300 11.300 0 0 0 4.400 15.600z" fill="#0f9d58"/>
<circle cx="516.800" cy="748" r="5.200" fill="#fff"/><circle cx="516.800" cy="748" r="4.100" fill="#4285f4"/>
<!-- fusion -->
<rect x="554" y="736" width="24" height="24.400" fill="#fbe5d2"/><path d="M560.500 740L568 738.500L574 739.500V743L567.500 744V747H572V750.500H567.500V757L561.500 755.500Z" fill="#e8862a"/><path d="M560.500 740L564 741V756L561.500 755.500Z" fill="#c86414"/><text x="571.500" y="758.500" font-size="4.500" fill="#e8862a" text-anchor="middle">360</text>
<!-- weather -->
<circle cx="936" cy="747.400" r="9" fill="url(#sun)"/>
<path d="M931 757.500q-4.200 0-4.200-3.700q0-3.400 3.700-3.700q.8-5.600 6.600-5.600q4.300 0 5.800 3.800q5.200-.4 5.200 4.600q0 4.600-4.600 4.600z" fill="url(#cld)"/>
<g fill="#fff" font-size="14.500">
<text x="957" y="754.100" textLength="29.500" lengthAdjust="spacingAndGlyphs">22°C</text>
<text x="995.500" y="754.100" textLength="80.300" lengthAdjust="spacingAndGlyphs">Parc. soleado</text>
</g>
<g fill="none" stroke="#fff" stroke-width="1.200">
<path d="M1093 751.300L1099 745.300L1105 751.300"/>
<rect x="1118.700" y="744.500" width="7.600" height="7.800" rx="1.800"/><path d="M1126.300 747.300l2.600-1.600v5.600l-2.600-1.600M1119.300 742.200q3-1.800 6.400 0M1119.300 754.700q3 1.800 6.400 0"/>
<path d="M1144.500 745.200H1152.800V751.600H1143.500M1152.800 747.200h1.300v2.400h-1.300M1146 746.600l3.600 3.600M1149.600 746.600l-3.600 3.600"/>
<path d="M1139.500 742.500v2.500M1142.500 742.500v2.500M1138.700 745h4.600v1.500q0 2-2.300 2t-2.300-2zM1141 748.500V753"/>
<path d="M1166.800 754.500A9.800 9.800 0 0 1 1176.500 744.700M1170 754.500A6.600 6.600 0 0 1 1176.500 747.900M1173.200 754.500A3.400 3.400 0 0 1 1176.500 751.100"/>
<path d="M1187.300 746.200h2.800l3.600-3.400v11.400l-3.600-3.400h-2.800zM1195.800 745.700q1.600 2.800 0 5.600M1198 743.800q2.800 4.700 0 9.400"/>
</g>
<path d="M1200.300 742q3.800 6.500 0 13" fill="none" stroke="#8a8677" stroke-width="1.100"/>
<circle cx="1176.300" cy="753.800" r="1.400" fill="#fff"/>
<g fill="#fff" font-size="12">
<text x="1215.600" y="751.700" font-size="11.500" textLength="17.700" lengthAdjust="spacingAndGlyphs">ESP</text>
<text x="1265" y="742.800" textLength="26" lengthAdjust="spacingAndGlyphs">18:19</text>
<text x="1250.100" y="760.800" textLength="56.900" lengthAdjust="spacingAndGlyphs">19/03/2022</text>
</g>
<path d="M1325 740.200H1341.200V752.700H1333.500L1330 756.200V752.700H1325Z" fill="#fff"/><path d="M1328 743.800h10.300M1328 746.600h10.300M1328 749.400h6.500" stroke="#3a362a" stroke-width="1.100"/>
<circle cx="1340.800" cy="755.600" r="7.600" fill="#3b3b3b" stroke="#8e8e8e" stroke-width="1"/><text x="1340.800" y="759.300" font-size="10" font-weight="bold" fill="#fff" text-anchor="middle" textLength="9.500" lengthAdjust="spacingAndGlyphs">11</text>
<path d="M1361.500 728V768" stroke="#8a8a84" stroke-width="1"/>
</svg>
</body>
</html>
